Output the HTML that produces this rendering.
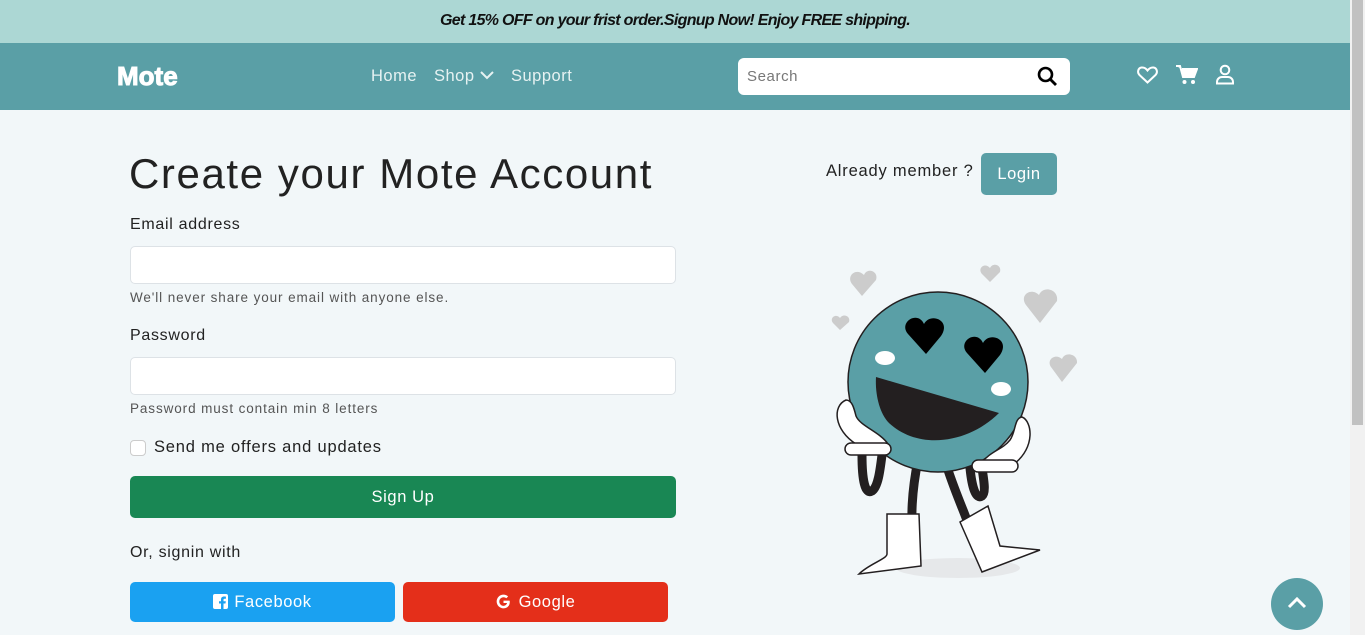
<!DOCTYPE html>
<html><head><meta charset="utf-8"><style>
*{box-sizing:border-box;margin:0;padding:0}
body{width:1365px;height:635px;overflow:hidden;background:#f2f7f9;font-family:"Liberation Sans",sans-serif;position:relative;color:#222}
.a{position:absolute}
.top{left:0;top:0;width:1350px;height:43px;background:#acd7d4;text-align:center;font:italic bold 16px/42px "Liberation Sans",sans-serif;color:#111;letter-spacing:-0.7px}
.nav{left:0;top:43px;width:1350px;height:67px;background:#5a9fa6}
.nav a{color:#e6f2f2;font-size:16.5px;text-decoration:none;letter-spacing:0.5px}
.inp{background:#fff;border:1px solid #dde2e6;border-radius:5px}
.lbl{font-size:16px;color:#222;letter-spacing:0.7px}
.help{font-size:13.5px;color:#555;letter-spacing:0.9px}
.btn{border-radius:5px;color:#fff;font-size:16.5px;text-align:center;letter-spacing:0.6px}
.sb{left:1350px;top:0;width:15px;height:635px;background:#f1f1f1}
</style></head><body>
<div class="a top">Get 15% OFF on your frist order.Signup Now! Enjoy FREE shipping.</div>
<div class="a nav">
 <div class="a" style="left:117px;top:16px;font:900 26px/34px 'Liberation Sans',sans-serif;color:#fff;letter-spacing:0px;-webkit-text-stroke:1px #fff">Mote</div>
 <a class="a" style="left:371px;top:24px">Home</a>
 <a class="a" style="left:434px;top:24px">Shop <svg width="14" height="10" viewBox="0 0 14 10" style="vertical-align:1px"><path d="M1 2l6 6 6-6" stroke="#e6f2f2" stroke-width="2" fill="none"/></svg></a>
 <a class="a" style="left:511px;top:24px">Support</a>
 <div class="a" style="left:738px;top:15px;width:332px;height:37px;background:#fff;border-radius:6px">
  <span class="a" style="left:9px;top:10px;font-size:15px;color:#777;letter-spacing:0.6px">Search</span>
  <svg class="a" style="left:299px;top:8px" width="21" height="21" viewBox="0 0 21 21"><circle cx="8.5" cy="8.5" r="6.5" stroke="#000" stroke-width="2.6" fill="none"/><path d="M13 13l6 6" stroke="#000" stroke-width="2.8"/></svg>
 </div>
 <svg class="a" style="left:1137px;top:23px" width="21" height="18" viewBox="0 0 21 18"><path d="M10.5 16.5L2.5 9C0 6.5 1 2 4.5 1.5 7 1.2 9 2.5 10.5 4.5 12 2.5 14 1.2 16.5 1.5 20 2 21 6.5 18.5 9z" stroke="#fff" stroke-width="2" fill="none"/></svg>
 <svg class="a" style="left:1176px;top:22px" width="22" height="20" viewBox="0 0 22 20"><path d="M0 1h4l3 11h11l3-8H6" stroke="#fff" stroke-width="2" fill="#fff"/><circle cx="8.5" cy="17" r="2" fill="#fff"/><circle cx="17" cy="17" r="2" fill="#fff"/></svg>
 <svg class="a" style="left:1215px;top:21px" width="20" height="21" viewBox="0 0 20 21"><circle cx="10" cy="6" r="4.3" stroke="#fff" stroke-width="2" fill="none"/><path d="M2 19.5v-1.5c0-3 2.5-5 5-5h6c2.5 0 5 2 5 5v1.5z" stroke="#fff" stroke-width="2" fill="none"/></svg>
</div>

<div class="a" style="left:129px;top:148px;font-size:42px;color:#222;line-height:52px;letter-spacing:1.6px">Create your Mote Account</div>
<div class="a lbl" style="left:130px;top:216px">Email address</div>
<div class="a inp" style="left:130px;top:246px;width:546px;height:38px"></div>
<div class="a help" style="left:130px;top:290px">We'll never share your email with anyone else.</div>
<div class="a lbl" style="left:130px;top:327px">Password</div>
<div class="a inp" style="left:130px;top:357px;width:546px;height:38px"></div>
<div class="a help" style="left:130px;top:401px">Password must contain min 8 letters</div>
<div class="a inp" style="left:130px;top:440px;width:16px;height:16px;border-radius:4px;border-color:#ccc"></div>
<div class="a lbl" style="left:154px;top:438px;font-size:16.5px;letter-spacing:0.8px">Send me offers and updates</div>
<div class="a btn" style="left:130px;top:476px;width:546px;height:42px;background:#198754;line-height:42px">Sign Up</div>
<div class="a lbl" style="left:130px;top:544px">Or, signin with</div>
<div class="a btn" style="left:130px;top:582px;width:265px;height:40px;background:#1aa1f1;line-height:40px"><svg width="15" height="15" viewBox="0 0 15 15" style="vertical-align:-2px;margin-right:6px"><rect width="15" height="15" rx="2" fill="#fff"/><path d="M10.5 15V9.5h2l.3-2.3h-2.3V5.8c0-.7.3-1.1 1.1-1.1h1.3V2.6c-.3 0-1-.1-1.9-.1-1.9 0-3 1.1-3 3.1v1.6H6v2.3h2V15z" fill="#1aa1f1"/></svg>Facebook</div>
<div class="a btn" style="left:403px;top:582px;width:265px;height:40px;background:#e42f1a;line-height:40px"><svg width="15" height="15" viewBox="0 0 16 16" style="vertical-align:-2px;margin-right:8px"><path d="M14.5 7H8v2.6h3.8C11.3 11.4 9.8 12.6 8 12.6 5.5 12.6 3.5 10.5 3.5 8S5.5 3.4 8 3.4c1.2 0 2.2.4 3 1.1l1.9-1.9C11.6 1.4 9.9.7 8 .7 4 .7.7 4 .7 8S4 15.3 8 15.3c3.9 0 6.7-2.7 6.7-6.8 0-.5 0-1-.2-1.5z" fill="#fff"/></svg>Google</div>

<div class="a lbl" style="left:826px;top:162px;font-size:16.5px;letter-spacing:0.8px">Already member ?</div>
<div class="a btn" style="left:981px;top:153px;width:76px;height:42px;background:#5a9fa6;line-height:42px">Login</div>

<svg class="a" style="left:800px;top:250px" width="300" height="340" viewBox="0 0 300 340">
 <g fill="#cccccc">
  <path d="M62 46l-10-12c-6-8 4-17 12-9 3-8 15-4 12 5z"/>
  <path d="M190 32l-8-8c-5-6 3-12 8-6 3-6 12-3 10 4z"/>
  <path d="M40 80l-7-7c-4-5 3-10 7-5 3-5 11-2 9 4z"/>
  <path d="M240 73l-14-18c-7-10 5-18 13-10 4-10 20-6 18 6z"/>
  <path d="M262 132l-11-15c-5-8 5-14 11-8 3-8 16-5 15 4z"/>
 </g>
 <ellipse cx="158" cy="318" rx="62" ry="10" fill="#e6e8ea"/>
 <path d="M62 205c0 25 3 40 10 36 6-4 8-20 10-36M118 210c-6 30-8 60-4 80M148 220c10 30 20 50 22 60M170 218c2 20 6 32 12 28 4-3 2-15 0-28" stroke="#231f20" stroke-width="9" fill="none" stroke-linecap="round"/>
 <circle cx="138" cy="132" r="90" fill="#5a9fa6" stroke="#231f20" stroke-width="1.5"/>
 <path d="M76 127l123 36c-30 30-80 38-110 10-10-10-14-30-13-46z" fill="#231f20"/>
 <path d="M126 104l-18-20c-10-12 10-24 16-10 6-12 28-4 17 12z" fill="#000"/>
 <path d="M185 123l-18-20c-10-12 10-24 16-10 6-12 28-4 17 12z" fill="#000"/>
 <ellipse cx="85" cy="108" rx="10" ry="7" fill="#fff"/>
 <ellipse cx="201" cy="139" rx="10" ry="7" fill="#fff"/>
 <path d="M46 150c-14 6-12 30 10 44h32c-8-12-28-18-32-28-2-8-4-16-10-16z" fill="#fff" stroke="#231f20" stroke-width="1.5"/>
 <rect x="45" y="193" width="46" height="12" rx="6" fill="#fff" stroke="#231f20" stroke-width="1.5"/>
 <path d="M222 167c10 4 14 30-8 47h-34c12-14 22-14 30-24 6-8 4-22 12-23z" fill="#fff" stroke="#231f20" stroke-width="1.5"/>
 <rect x="172" y="210" width="46" height="12" rx="6" fill="#fff" stroke="#231f20" stroke-width="1.5"/>
 <path d="M87 264h32l2 52-62 8c10-10 28-15 28-20z" fill="#fff" stroke="#231f20" stroke-width="1.5"/>
 <path d="M160 272l28-16 12 40 40 4-58 22z" fill="#fff" stroke="#231f20" stroke-width="1.5"/>
</svg>

<div class="a" style="left:1271px;top:578px;width:52px;height:52px;border-radius:50%;background:#5a9fa6"><svg class="a" style="left:16px;top:18px" width="20" height="14" viewBox="0 0 20 14"><path d="M2 11l8-8 8 8" stroke="#fff" stroke-width="3" fill="none"/></svg></div>
<div class="a sb"><div class="a" style="left:2px;top:0;width:11px;height:425px;background:#c1c1c1"></div></div>
</body></html>
